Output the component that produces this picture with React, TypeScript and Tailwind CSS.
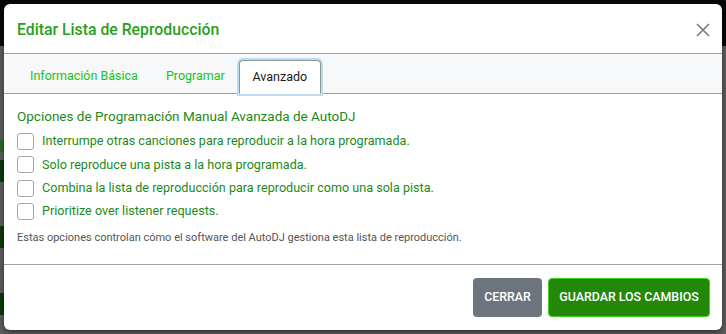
import React from "react";

const options = [
  "Interrumpe otras canciones para reproducir a la hora programada.",
  "Solo reproduce una pista a la hora programada.",
  "Combina la lista de reproducción para reproducir como una sola pista.",
  "Prioritize over listener requests.",
];

export default function App() {
  return (
    <div
      className="relative w-[726px] h-[334px] overflow-hidden bg-[#5e5e5e]"
      style={{ fontFamily: "Roboto, 'Liberation Sans', sans-serif" }}
    >
      {/* dimmed page behind */}
      <div className="absolute left-0 top-0 w-full h-[46px] bg-[#080808]" />
      <div className="absolute left-0 top-[140px] w-[4px] h-[12px] bg-[#2c6a2c]" />
      <div className="absolute left-0 top-[160px] w-[4px] h-[22px] bg-[#0d3a0d]" />
      <div className="absolute left-0 top-[226px] w-[4px] h-[22px] bg-[#0d3a0d]" />
      <div className="absolute left-0 top-[293px] w-[4px] h-[22px] bg-[#0d3a0d]" />

      {/* dialog */}
      <div className="absolute left-[4px] top-[4px] w-[718px] h-[326px] bg-white rounded-[6px] shadow-[0_2px_6px_rgba(0,0,0,0.5)] flex flex-col overflow-hidden">
        {/* header */}
        <div className="h-[50px] shrink-0 flex items-center justify-between pl-[13px] pr-[11px] pt-[2px] border-b border-[#97a597]">
          <h1 className="text-[15.8px] font-medium text-[#2a9f1c] leading-none">
            Editar Lista de Reproducción
          </h1>
          <svg width="16" height="16" viewBox="0 0 16 16">
            <path d="M2 2 L14 14 M14 2 L2 14" stroke="#7a7a7a" strokeWidth="1.6" fill="none" />
          </svg>
        </div>

        {/* tabs */}
        <div className="h-[40px] shrink-0 bg-[#f6f8f9] border-b border-[#97a597] flex items-end pl-[10px]">
          <div className="h-[34px] px-[16px] flex items-center text-[12.5px] text-[#22c21a]">
            Información Básica
          </div>
          <div className="h-[34px] px-[12px] flex items-center text-[12.5px] text-[#22c21a]">
            Programar
          </div>
          <div className="h-[34px] -mb-[1px] ml-[2px] w-[82px] flex items-center justify-center text-[12.5px] text-[#1a1a1a] bg-white border border-[#8a9a8a] border-b-white rounded-t-[4px] shadow-[0_0_0_2px_#bcdcf5]">
            Avanzado
          </div>
        </div>

        {/* content */}
        <div className="flex-1 px-[13px] pt-[13px] border-b border-[#97a597]">
          <h2 className="text-[13.5px] text-[#1c8a1c] leading-[18px] mb-[5px]">
            Opciones de Programación Manual Avanzada de AutoDJ
          </h2>
          <div className="flex flex-col">
            {options.map((o) => (
              <label key={o} className="flex items-center h-[23.3px] gap-[8px]">
                <span className="w-[17px] h-[17px] rounded-[3px] border border-[#a8a8a8] bg-white" />
                <span className="text-[12.6px] text-[#1c8a1c]">{o}</span>
              </label>
            ))}
          </div>
          <p className="mt-[7px] text-[11px] text-[#555]">
            Estas opciones controlan cómo el software del AutoDJ gestiona esta lista de reproducción.
          </p>
        </div>

        {/* footer */}
        <div className="h-[65px] shrink-0 flex items-center justify-end gap-[6px] pr-[12px]">
          <button className="h-[39px] w-[69px] rounded-[4px] bg-[#6c757d] text-white text-[12.4px] font-medium">
            CERRAR
          </button>
          <button className="h-[39px] w-[162px] rounded-[4px] bg-[#23880a] border border-[#3bd21e] text-white text-[12.4px] font-medium">
            GUARDAR LOS CAMBIOS
          </button>
        </div>
      </div>
    </div>
  );
}
